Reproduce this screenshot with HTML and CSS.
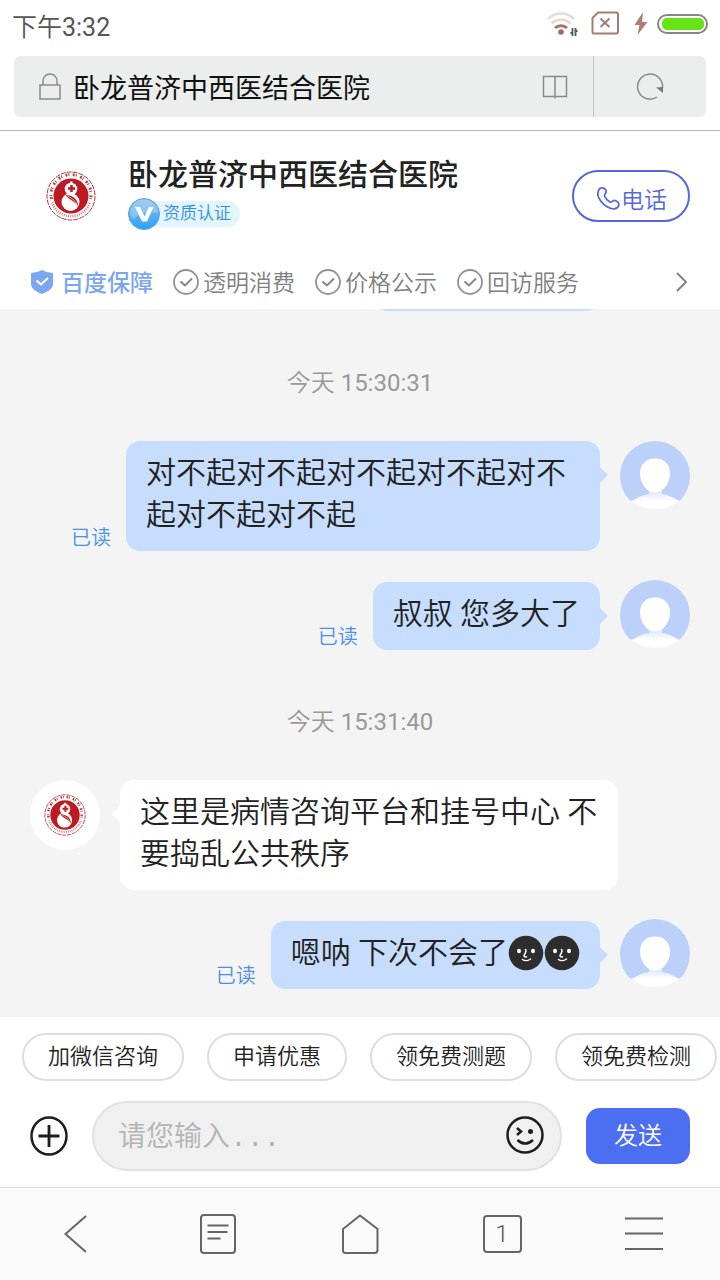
FILE: index.html
```html
<!DOCTYPE html>
<html lang="zh-CN">
<head>
<meta charset="utf-8">
<meta name="viewport" content="width=device-width, initial-scale=1">
<title>卧龙普济中西医结合医院</title>
<link rel="stylesheet" href="styles.css">
</head>
<body>
<svg class="sprite" aria-hidden="true">
  <symbol id="logo" viewBox="0 0 50 50">
    <circle cx="25" cy="25" r="24" fill="#fff" stroke="#b5303a" stroke-width="1" stroke-dasharray="5 1"/>
    <path d="M5.500 28A20 20 0 1 1 44.500 28" fill="none" stroke="#b5464e" stroke-width="3" stroke-dasharray="2 1 1 3.500"/>
    <path d="M6 31.500A20 20 0 0 0 44 31.500" fill="none" stroke="#cf7d82" stroke-width="2.500" stroke-dasharray="1 1.200"/>
    <circle cx="25" cy="25" r="17.500" fill="#bd1a22"/>
    <path d="M24 10.500h2.500V13h-2.500z" fill="#fff"/>
    <circle cx="25" cy="18" r="6.300" fill="#fff"/>
    <circle cx="24.500" cy="31" r="9" fill="#fff"/>
    <path d="M25.500 14v7M22 17.500h7" stroke="#bd1a22" stroke-width="2.500"/>
    <path d="M19.500 24c5 0 13 3 12.500 11-3-5-9-6-12.500-11z" fill="#bd1a22"/>
    <path d="M21.500 25c4 2 7 4 9.500 8" stroke="#fff" stroke-width=".6" fill="none"/>
  </symbol>
  <symbol id="user" viewBox="0 0 70 70">
    <clipPath id="round"><circle cx="35" cy="35" r="35"/></clipPath>
    <linearGradient id="neck" x1="0" y1="0" x2="0" y2="1">
      <stop offset="0" stop-color="#d3e2fc"/>
      <stop offset=".6" stop-color="#fff"/>
    </linearGradient>
    <g clip-path="url(#round)">
      <path d="M0 0h70v60H0z" fill="#bbd1fa"/>
      <path d="M10 59.500h50V70H10z" fill="#f4f4f4"/>
      <path d="M12 60q9-6 17-7v-5h13v5q8 1 17 7c-7 5-14 8-24 8s-17-3-23-8z" fill="url(#neck)"/>
      <path d="M35 17.500c9 0 15 6 15 15 0 10-7 19-15 19s-15-9-15-19c0-9 6-15 15-15z" fill="#fff"/>
    </g>
  </symbol>
  <symbol id="check" viewBox="0 0 26 26">
    <circle cx="13" cy="13" r="12" fill="none" stroke="#939393" stroke-width="1.800"/>
    <path d="M7.500 12.500l4.500 4 7-7" fill="none" stroke="#858585" stroke-width="2"/>
  </symbol>
  <symbol id="moon" viewBox="0 0 36 36">
    <circle cx="18" cy="18" r="17.300" fill="#2d2d2d"/>
    <ellipse cx="11" cy="16" rx="2" ry="2.300" fill="#fff"/>
    <ellipse cx="25" cy="16" rx="2" ry="2.300" fill="#fff"/>
    <path d="M17.500 14.500c1.500 2-.5 4-1.500 6 0 1 1 1.500 2.500 1.500M14.500 24.500c2 1.500 5.500 1.500 8-.5" fill="none" stroke="#fff" stroke-width="1.500" stroke-linecap="round"/>
  </symbol>
</svg>

<div class="status">
  <span>下午<span class="digits">3:32</span></span>
  <svg width="162" height="28" viewBox="0 0 162 28" aria-hidden="true">
    <g fill="none">
      <path d="M2 8a18 18 0 0 1 26 0" stroke="#e6dcd7" stroke-width="2.500"/>
      <path d="M5.500 12.500a14 14 0 0 1 19 0" stroke="#ecd5cd" stroke-width="2.500"/>
      <path d="M9 17a9 9 0 0 1 12 0" stroke="#a47468" stroke-width="3"/>
      <circle cx="15" cy="21" r="2.800" fill="#a06c60"/>
      <path d="M26.500 17v8M29.500 17v8M24.500 22h2M29.500 20h2" stroke="#555" stroke-width="1.800"/>
      <path d="M52 1.500h18q2 0 2 2v17q0 2-2 2H47.500q-1 0-1-2V7z" stroke="#a47c70" stroke-width="2"/>
      <path d="M54.500 7.500l9 8.500M63.500 7.500l-9 8.500" stroke="#a47c70" stroke-width="2"/>
      <path d="M97 1L88.500 14h5L91.500 24 101.500 11h-5.500z" fill="#ac7d70"/>
      <rect x="112" y="4" width="49" height="18" rx="9" stroke="#858585" stroke-width="2"/>
      <rect x="116" y="7" width="42" height="12" rx="5" fill="#65e315"/>
    </g>
  </svg>
</div>

<div class="address">
  <div class="address-bar">
    <svg width="24" height="28" viewBox="0 0 24 28" fill="none" stroke="#8c8c8c" stroke-width="1.500" aria-hidden="true">
      <path d="M2 12h20v14H2zM5 12V8a7 7 0 0 1 14 0v4"/>
    </svg>
    <span class="address-title">卧龙普济中西医结合医院</span>
    <button class="icon-btn book" aria-label="阅读">
      <svg width="26" height="24" viewBox="0 0 26 24" fill="none" stroke="#8a8a8a" stroke-width="1.500"><path d="M1.500 1.500h23v20h-23zM13 1.500v22"/></svg>
    </button>
    <button class="icon-btn reload" aria-label="刷新">
      <svg width="28" height="28" viewBox="0 0 28 28"><path d="M21 24A12.500 12.500 0 1 1 26.500 15" fill="none" stroke="#8a8a8a" stroke-width="1.500"/><path d="M20 14.500l7-.5v6z" fill="#7a7a7a"/></svg>
    </button>
  </div>
</div>

<header class="hospital">
  <div class="hospital-main">
    <div class="hospital-logo"><svg width="50" height="50"><use href="#logo"/></svg></div>
    <div class="hospital-info">
      <h1>卧龙普济中西医结合医院</h1>
      <div class="badge">
        <svg width="32" height="32" viewBox="0 0 32 32" aria-hidden="true">
          <defs>
            <linearGradient id="v" x1="0" y1="0" x2="0" y2="1"><stop offset="0" stop-color="#8dbbe4"/><stop offset="1" stop-color="#2aa3fa"/></linearGradient>
          </defs>
          <circle cx="16" cy="16" r="15.500" fill="url(#v)" stroke="#58a5e2"/>
          <path d="M2 16a14 14 0 0 1 28-1c-9-2-19 0-25 7z" fill="#fff" opacity=".25"/>
          <path d="M7 9h5l4.500 9.500L21 9h4.500l-6.500 14.500h-5z" fill="#fff"/>
        </svg>
        <span>资质认证</span>
      </div>
    </div>
    <button class="call">
      <svg width="26" height="26" viewBox="0 0 26 26" fill="none" stroke="#5468dc" stroke-width="1.800" stroke-linejoin="round" aria-hidden="true">
        <path d="M3.500 5.500C5 2 9.500 2 11 5.500c1 2.500-2 3.500-1.500 5.500 1 2.500 3 4.500 5.500 6 2 1 2.500-2 5-1.500 4 1 5 4.500 2.500 7C16 28-.5 15 3.500 5.500z"/>
      </svg>
      <span>电话</span>
    </button>
  </div>
  <div class="promises">
    <span class="promise baidu">
      <svg width="24" height="26" viewBox="0 0 24 26" aria-hidden="true"><path d="M12 1q5 3 11 3v11c0 5-6 8-11 10C7 23 1 20 1 15V4q6 0 11-3z" fill="#7ba7f1"/><path d="M6.500 11.500l4.500 4 7-6.500" fill="none" stroke="#fff" stroke-width="2"/></svg>
      <span>百度保障</span>
    </span>
    <span class="promise"><svg width="26" height="26"><use href="#check"/></svg><span>透明消费</span></span>
    <span class="promise"><svg width="26" height="26"><use href="#check"/></svg><span>价格公示</span></span>
    <span class="promise"><svg width="26" height="26"><use href="#check"/></svg><span>回访服务</span></span>
    <button class="icon-btn more" aria-label="更多">
      <svg width="14" height="22" viewBox="0 0 14 22" fill="none" stroke="#7d7d7d" stroke-width="1.800"><path d="M1 2l9 9-9 9"/></svg>
    </button>
  </div>
</header>

<main class="chat">
  <div class="msg mine">
    <div class="bubble previous"></div>
    <svg class="avatar"><use href="#user"/></svg>
  </div>
  <div class="time">今天 <span class="digits">15:30:31</span></div>
  <div class="msg mine">
    <span class="read">已读</span>
    <div class="bubble">对不起对不起对不起对不起对不起对不起对不起</div>
    <svg class="avatar"><use href="#user"/></svg>
  </div>
  <div class="msg mine">
    <span class="read">已读</span>
    <div class="bubble">叔叔 您多大了</div>
    <svg class="avatar"><use href="#user"/></svg>
  </div>
  <div class="time">今天 <span class="digits">15:31:40</span></div>
  <div class="msg theirs">
    <div class="avatar doctor"><svg width="42" height="42"><use href="#logo"/></svg></div>
    <div class="bubble">这里是病情咨询平台和挂号中心 不要捣乱公共秩序</div>
  </div>
  <div class="msg mine">
    <span class="read">已读</span>
    <div class="bubble">嗯呐 下次不会了<svg class="emoji"><use href="#moon"/></svg><svg class="emoji"><use href="#moon"/></svg></div>
    <svg class="avatar"><use href="#user"/></svg>
  </div>
</main>

<footer class="reply">
  <div class="quick">
    <button>加微信咨询</button>
    <button>申请优惠</button>
    <button>领免费测题</button>
    <button>领免费检测</button>
  </div>
  <form class="composer">
    <button type="button" class="icon-btn" aria-label="添加">
      <svg width="38" height="40" viewBox="0 0 38 40" fill="none" stroke="#1e1e1e"><ellipse cx="19" cy="20" rx="17.500" ry="18.500" stroke-width="2.500"/><path d="M19 9v22M8.500 20h21" stroke-width="2.800"/></svg>
    </button>
    <div class="field">
      <input type="text" placeholder="请您输入..." aria-label="请您输入">
      <button type="button" class="icon-btn" aria-label="表情">
        <svg width="38" height="38" viewBox="0 0 38 38" fill="none" stroke="#1e1e1e" stroke-width="2.500"><circle cx="19" cy="19" r="17.500"/><path d="M11 12l4 3.500-4 3.500M11.500 24q7.500 7 15.500 0"/><circle cx="24.500" cy="15.500" r="2.500" fill="#1e1e1e" stroke="none"/></svg>
      </button>
    </div>
    <button type="button" class="send">发送</button>
  </form>
</footer>

<nav class="browser-nav">
  <button class="icon-btn" aria-label="后退"><svg width="40" height="40" viewBox="0 0 40 40"><path d="M30 2L9.500 20 30 38"/></svg></button>
  <button class="icon-btn" aria-label="资讯"><svg width="40" height="40" viewBox="0 0 40 40"><rect x="3" y="1" width="34" height="38" rx="3"/><path d="M9.500 11.500h21M9.500 18h20M9.500 24.500h13"/></svg></button>
  <button class="icon-btn" aria-label="主页"><svg width="40" height="40" viewBox="0 0 40 40"><path d="M3 15L20 1.500 37.500 15v21q0 3-3 3H5q-2 0-2-3z"/></svg></button>
  <button class="icon-btn" aria-label="窗口"><span class="tabs">1</span></button>
  <button class="icon-btn" aria-label="菜单"><svg width="40" height="40" viewBox="0 0 40 40"><path d="M1 4.500h38M1 19.500h38M1 35h38"/></svg></button>
</nav>
</body>
</html>
```
FILE: styles.css
```css
* {
  box-sizing: border-box;
  margin: 0;
  padding: 0;
}

body {
  display: flex;
  flex-direction: column;
  height: 100vh;
  background: #fff;
  color: #222;
  font-family: Roboto, "Noto Sans CJK SC", sans-serif;
  font-weight: 350;
}

button,
input {
  border: 0;
  background: none;
  color: inherit;
  font: inherit;
}

button {
  cursor: pointer;
  white-space: nowrap;
}

svg {
  display: block;
  flex: none;
}

.sprite {
  position: absolute;
  width: 0;
  height: 0;
}

.icon-btn {
  display: flex;
  align-items: center;
  justify-content: center;
  flex: none;
}

.digits {
  font-weight: 400;
}

/* phone status and address bar */
.status {
  display: flex;
  align-items: center;
  justify-content: space-between;
  height: 50px;
  padding: 0 12px;
  color: #555;
  font-size: 25px;
}

.address {
  padding: 6px 14px 13px;
  border-bottom: 1px solid #b5b5b5;
}

.address-bar {
  display: flex;
  align-items: center;
  height: 61px;
  padding-left: 24px;
  border-radius: 6px;
  background: #eceeed;
}

.address-title {
  flex: 1;
  padding-left: 11px;
  color: #111;
  font-size: 27px;
  font-weight: 400;
}

.book {
  width: 76px;
  height: 61px;
}

.reload {
  width: 113px;
  height: 61px;
  border-left: 1px solid #c4c6c5;
}

/* hospital header */
.hospital {
  padding: 24px 30px 0;
}

.hospital-main {
  display: flex;
  align-items: center;
  gap: 16px;
  height: 82px;
}

.hospital-logo {
  display: flex;
  justify-content: center;
  width: 82px;
}

.hospital-info {
  flex: 1;
  align-self: flex-start;
}

.hospital-info h1 {
  font-size: 30px;
  font-weight: 500;
  line-height: 40px;
}

.badge {
  display: flex;
  align-items: center;
  height: 38px;
  color: #2f8fe8;
  font-size: 17px;
}

.badge span {
  margin-left: -16px;
  padding: 0 9px 2px 19px;
  border-radius: 0 13px 13px 0;
  background: #e3f5fe;
  line-height: 24px;
}

.badge svg {
  position: relative;
}

.call {
  display: flex;
  align-items: center;
  justify-content: center;
  width: 118px;
  height: 52px;
  padding-top: 3px;
  border: 2px solid #5468dc;
  border-radius: 26px;
  color: #5468dc;
  font-size: 23px;
}

.promises {
  display: flex;
  align-items: center;
  gap: 20px;
  height: 54px;
  margin-top: 18px;
  color: #808080;
  font-size: 23px;
}

.promise {
  display: flex;
  align-items: center;
  gap: 4px;
  white-space: nowrap;
}

.promise span {
  padding-bottom: 2px;
}

.promise.baidu {
  gap: 7px;
  color: #7ba7f1;
  font-weight: 500;
}

.more {
  margin-left: auto;
}

/* conversation */
.chat {
  display: flex;
  flex: 1;
  flex-direction: column;
  justify-content: flex-end;
  gap: 29px;
  min-height: 0;
  overflow: hidden;
  padding: 0 30px 28px;
  background: #f4f4f4;
}

.time {
  flex: none;
  padding: 26px 0 12px;
  color: #999;
  font-size: 24px;
  line-height: 34px;
  text-align: center;
}

.msg {
  display: flex;
  flex: none;
  align-items: flex-end;
}

.mine {
  justify-content: flex-end;
}

.avatar {
  align-self: flex-start;
  flex: none;
  width: 70px;
  height: 70px;
}

.doctor {
  display: flex;
  align-items: center;
  justify-content: center;
  border-radius: 50%;
  background: #fff;
}

.bubble {
  position: relative;
  margin: 0 20px 0 15px;
  padding: 11px 20px 15px;
  border-radius: 14px;
  background: #c7ddfd;
  font-size: 30px;
  line-height: 42px;
}

.mine .bubble {
  max-width: calc(100% - 186px);
}

.theirs .bubble {
  max-width: calc(100% - 162px);
  margin: 0 0 0 20px;
  background: #fff;
}

.bubble::after {
  content: "";
  position: absolute;
  top: 26px;
  left: 100%;
  border: 8px solid transparent;
  border-right-width: 0;
  border-left-color: #c7ddfd;
}

.theirs .bubble::after {
  right: 100%;
  left: auto;
  border-right: 8px solid #fff;
  border-left-width: 0;
}

.previous {
  width: 226px;
  height: 68px;
}

.read {
  color: #4b8df0;
  font-size: 20px;
  line-height: 26px;
}

.emoji {
  display: inline-block;
  width: 36px;
  height: 36px;
  vertical-align: -8px;
}

/* reply area */
.reply {
  padding: 16px 0;
}

.quick {
  display: flex;
  gap: 23px;
  overflow: hidden;
  padding-left: 22px;
}

.quick button {
  flex: none;
  height: 48px;
  padding: 0 24px 6px;
  border: 2px solid #dedede;
  border-radius: 24px;
  font-size: 22px;
}

.composer {
  display: flex;
  align-items: center;
  gap: 24px;
  margin-top: 20px;
  padding: 0 30px;
}

.field {
  display: flex;
  align-items: center;
  flex: 1;
  height: 70px;
  padding: 0 16px 2px 24px;
  border: 2px solid #e2e2e2;
  border-radius: 35px;
  background: #f0f0f0;
}

.field input {
  flex: 1;
  min-width: 0;
  padding-top: 6px;
  outline: 0;
  font-family: "Liberation Mono", "Noto Sans CJK SC", monospace;
  font-size: 28px;
}

.field input::placeholder {
  color: #b3b3b3;
}

.send {
  width: 104px;
  height: 56px;
  padding-bottom: 6px;
  border-radius: 14px;
  background: #4c6ef0;
  color: #fff;
  font-size: 24px;
}

.browser-nav {
  display: flex;
  height: 93px;
  padding: 0 5px;
  border-top: 1px solid #dcdcdc;
  background: #fafafa;
}

.browser-nav .icon-btn {
  flex: 1;
}

.browser-nav svg {
  fill: none;
  stroke: #666;
  stroke-width: 2;
}

.tabs {
  width: 39px;
  height: 38px;
  border: 2px solid #666;
  border-radius: 4px;
  color: #555;
  font-size: 24px;
  line-height: 34px;
}
```
